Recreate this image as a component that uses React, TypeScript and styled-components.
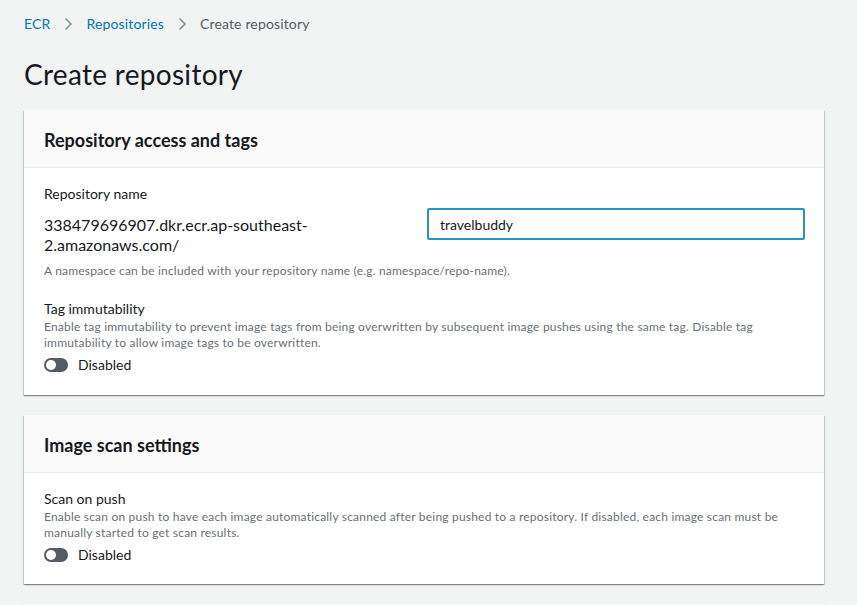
import React from "react";
import styled, { createGlobalStyle } from "styled-components";

const GlobalStyle = createGlobalStyle`
  html, body {
    margin: 0;
    padding: 0;
    background: #f2f3f3;
    font-family: Lato, "Liberation Sans", Arial, sans-serif;
    color: #16191f;
  }
`;

const Page = styled.div`
  padding: 14px 33px 0 24px;
  display: flex;
  flex-direction: column;
`;

const Breadcrumbs = styled.nav`
  display: flex;
  align-items: center;
  gap: 13px;
  font-size: 14px;
  line-height: 20px;
  height: 20px;
  letter-spacing: 0.15px;
`;

const Crumb = styled.a<{ $current?: boolean }>`
  color: ${(p) => (p.$current ? "#545b64" : "#0073bb")};
  text-decoration: none;
`;

const Chevron = () => (
  <svg width="10" height="14" viewBox="0 0 10 14" fill="none">
    <path d="M2.5 1.5 L8 7 L2.5 12.5" stroke="#879596" strokeWidth="1.6" />
  </svg>
);

const Title = styled.h1`
  margin: 22px 0 0;
  font-size: 28px;
  line-height: 36px;
  font-weight: 400;
  letter-spacing: 0.3px;
`;

const Card = styled.section`
  margin-top: 18px;
  background: #ffffff;
  box-shadow: 0 1px 1px 0 rgba(0, 28, 36, 0.3), 1px 1px 1px 0 rgba(0, 28, 36, 0.15),
    -1px 1px 1px 0 rgba(0, 28, 36, 0.15);

  & + & {
    margin-top: 20px;
  }
`;

const CardHeader = styled.header`
  background: #fafafa;
  border-bottom: 1px solid #eaeded;
  height: 57px;
  padding: 0 20px;
  display: flex;
  align-items: center;
`;

const CardTitle = styled.h2`
  margin: 2px 0 0;
  font-size: 18px;
  font-weight: 700;
`;

const CardBody = styled.div<{ $bottom?: number }>`
  padding: 16px 20px ${(p) => p.$bottom ?? 20}px;
  display: flex;
  flex-direction: column;
`;

const Label = styled.div`
  font-size: 14px;
  line-height: 20px;
`;

const Description = styled.div`
  font-size: 12px;
  line-height: 16px;
  color: #687078;
  letter-spacing: 0.2px;
`;

const NameRow = styled.div`
  display: grid;
  grid-template-columns: 363px 1fr;
  column-gap: 20px;
  align-items: start;
  margin-top: 4px;
`;

const Prefix = styled.div`
  padding-top: 7px;
  font-size: 16px;
  line-height: 20px;
`;

const Input = styled.input`
  box-sizing: border-box;
  width: 378px;
  height: 32px;
  border: 2px solid #2b93c3;
  border-radius: 2px;
  padding: 0 11px;
  font-family: inherit;
  font-size: 14px;
  color: #16191f;
  outline: none;
  background: #fff;
`;

const Hint = styled(Description)`
  margin-top: 8px;
`;

const Field = styled.div<{ $gap?: number }>`
  margin-top: ${(p) => p.$gap ?? 0}px;
  display: flex;
  flex-direction: column;
`;

const ToggleRow = styled.label`
  display: flex;
  align-items: center;
  gap: 10px;
  margin-top: 4px;
  font-size: 14px;
  line-height: 20px;
`;

const Track = styled.span`
  box-sizing: border-box;
  width: 24px;
  height: 14px;
  border-radius: 7px;
  background: #545b64;
  padding: 2px;
  display: flex;
`;

const Knob = styled.span`
  width: 10px;
  height: 10px;
  border-radius: 50%;
  background: #fff;
`;

const Toggle = ({ label }: { label: string }) => (
  <ToggleRow>
    <Track>
      <Knob />
    </Track>
    {label}
  </ToggleRow>
);

export default function App() {
  return (
    <>
      <GlobalStyle />
      <Page>
        <Breadcrumbs>
          <Crumb href="#">ECR</Crumb>
          <Chevron />
          <Crumb href="#">Repositories</Crumb>
          <Chevron />
          <Crumb $current>Create repository</Crumb>
        </Breadcrumbs>
        <Title>Create repository</Title>

        <Card>
          <CardHeader>
            <CardTitle>Repository access and tags</CardTitle>
          </CardHeader>
          <CardBody>
            <Label>Repository name</Label>
            <NameRow>
              <Prefix>
                338479696907.dkr.ecr.ap-southeast-
                <br />
                2.amazonaws.com/
              </Prefix>
              <Input defaultValue="travelbuddy" />
            </NameRow>
            <Hint>A namespace can be included with your repository name (e.g. namespace/repo-name).</Hint>
            <Field $gap={20}>
              <Label>Tag immutability</Label>
              <Description>
                Enable tag immutability to prevent image tags from being overwritten by subsequent image pushes
                using the same tag. Disable tag immutability to allow image tags to be overwritten.
              </Description>
              <Toggle label="Disabled" />
            </Field>
          </CardBody>
        </Card>

        <Card>
          <CardHeader>
            <CardTitle>Image scan settings</CardTitle>
          </CardHeader>
          <CardBody $bottom={19}>
            <Field>
              <Label>Scan on push</Label>
              <Description>
                Enable scan on push to have each image automatically scanned after being pushed to a repository. If
                disabled, each image scan must be manually started to get scan results.
              </Description>
              <Toggle label="Disabled" />
            </Field>
          </CardBody>
        </Card>

        <Card>
          <CardHeader />
        </Card>
      </Page>
    </>
  );
}
